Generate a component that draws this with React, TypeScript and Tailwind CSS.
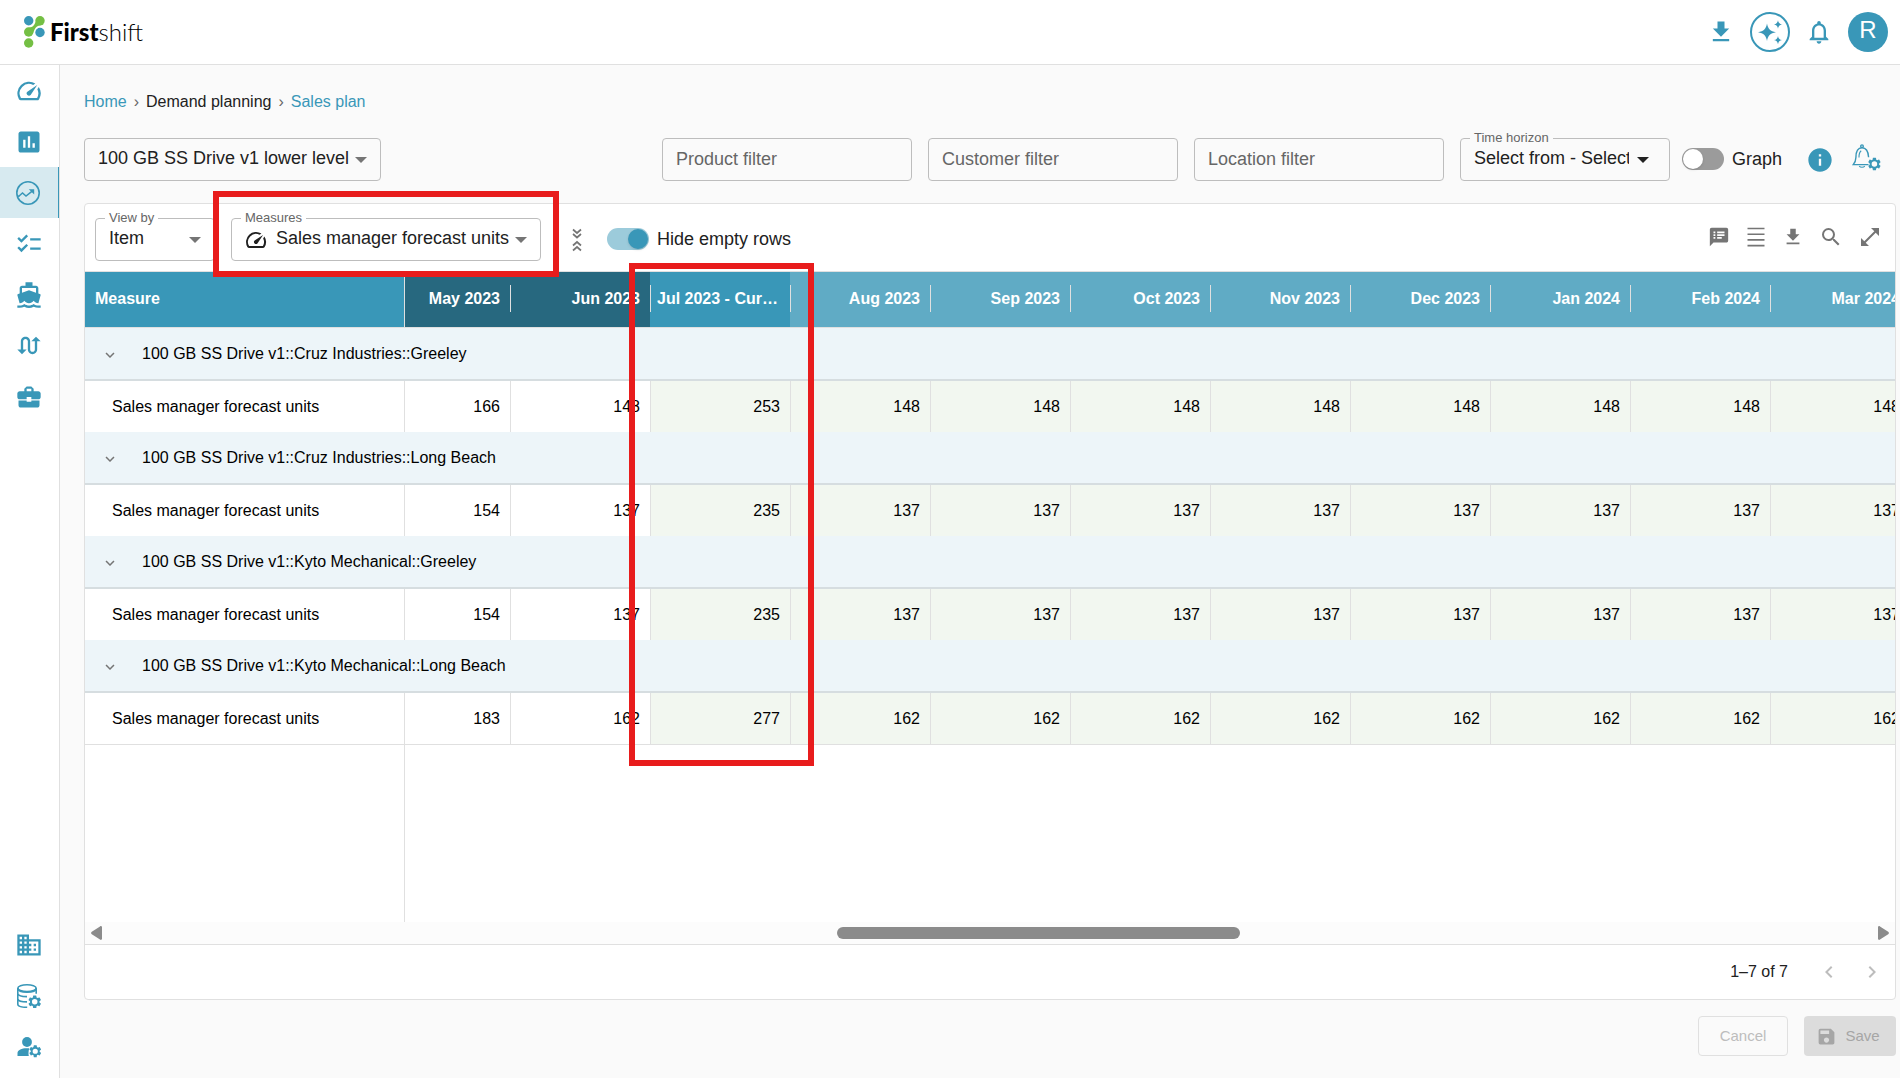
import { ReactNode, useState } from "react";
import { twMerge } from "tailwind-merge";
import {
  MdBusiness,
  MdBusinessCenter,
  MdChecklist,
  MdChevronLeft,
  MdChevronRight,
  MdDirectionsBoat,
  MdExpandMore,
  MdFileDownload,
  MdInfo,
  MdInsertChart,
  MdNotificationsNone,
  MdOpenInFull,
  MdSave,
  MdSearch,
  MdSpeakerNotes,
  MdSpeed,
  MdSwapCalls,
} from "react-icons/md";

type IconProps = { className?: string };

const GEAR =
  "M19.14 12.94c.04-.3.06-.61.06-.94 0-.32-.02-.64-.07-.94l2.03-1.58a.49.49 0 0 0 .12-.61l-1.92-3.32a.488.488 0 0 0-.59-.22l-2.39.96c-.5-.38-1.03-.7-1.62-.94l-.36-2.54a.484.484 0 0 0-.48-.41h-3.84c-.24 0-.43.17-.47.41l-.36 2.54c-.59.24-1.13.57-1.62.94l-2.39-.96c-.22-.08-.47 0-.59.22L2.74 8.87c-.12.21-.08.47.12.61l2.03 1.58c-.05.3-.09.63-.09.94s.02.64.07.94l-2.03 1.58a.49.49 0 0 0-.12.61l1.92 3.32c.12.22.37.29.59.22l2.39-.96c.5.38 1.03.7 1.62.94l.36 2.54c.05.24.24.41.48.41h3.84c.24 0 .44-.17.47-.41l.36-2.54c.59-.24 1.13-.56 1.62-.94l2.39.96c.22.08.47 0 .59-.22l1.92-3.32c.12-.22.07-.47-.12-.61l-2.01-1.58zM12 16.2a4.2 4.2 0 1 1 0-8.4 4.2 4.2 0 0 1 0 8.4z";

const TrendIcon = ({ className }: IconProps) => (
  <svg viewBox="0 0 24 24" className={className} fill="none" stroke="currentColor">
    <circle cx="12" cy="12" r="11.2" strokeWidth="1.6" />
    <path d="M2.5 15.5 6.5 12l3.5 3 6.5-5.2" strokeWidth="1.5" />
    <path d="M1.5 16l2-1.5" strokeWidth="1.3" />
    <path d="M12.8 8.2h5.4v5.2z" fill="currentColor" stroke="none" />
  </svg>
);

const DatabaseGearIcon = ({ className }: IconProps) => (
  <svg viewBox="0 0 24 24" className={className} fill="none" stroke="currentColor" strokeWidth="1.6">
    <ellipse cx="10" cy="4.2" rx="9.2" ry="3.4" />
    <path d="M.8 4.2v16c0 1.9 4 3 9.4 3.2M.8 9.6c.4 1.9 4.6 3 9.2 3M.8 15c.4 1.8 4.4 2.9 9.2 2.9M19.2 4.2v5.6" />
    <path d="M.8 4.4c.4 2.4 4.6 3.9 9.2 3.9s8.8-1.3 9.2-3.9" />
    <g transform="translate(9.8 9.9) scale(.66)" fill="currentColor" stroke="none">
      <path d={GEAR} />
    </g>
  </svg>
);

const UserGearIcon = ({ className }: IconProps) => (
  <svg viewBox="0 0 24 24" className={className} fill="currentColor">
    <circle cx="10" cy="7" r="4.9" />
    <path d="M11.8 21H.5v-3c0-3 4.5-4.8 8.8-4.8h3c-.9 2.6-1 5.4-.5 7.8z" />
    <g transform="translate(10.8 8.8) scale(.62)">
      <path d={GEAR} />
    </g>
  </svg>
);

const BellGearIcon = ({ className }: IconProps) => (
  <svg viewBox="0 0 30 28" className={className} fill="none" stroke="currentColor" strokeWidth="1.4">
    <circle cx="10" cy="2.2" r="1.3" />
    <path d="M16.5 20.6H1.2c2-2.2 2.7-4 2.7-7 0-5.6 1.8-9.8 6.1-9.8s6.2 3.4 6.6 9.4" />
    <path d="M7 13.5c-.1-3 .7-5.6 2.2-6.8M7.2 22.2c1.2 1.4 4.4 1.4 5.6 0" strokeWidth="1.1" />
    <g transform="translate(14.5 12.1) scale(.66)" fill="currentColor" stroke="none">
      <path d={GEAR} />
    </g>
  </svg>
);

const SparkleIcon = ({ className }: IconProps) => (
  <svg viewBox="0 0 24 24" className={className} fill="currentColor">
    <path d="M9 3.500c.8 5 3.200 7.900 9 8.800-5.800.9-8.200 3.800-9 8.800-.8-5-3.200-7.900-9-8.800 5.800-.9 8.200-3.800 9-8.800z" />
    <path d="M20 .3c.4 2.400 1.500 3.800 4 4.200-2.500.4-3.600 1.800-4 4.200-.4-2.400-1.500-3.800-4-4.200 2.500-.4 3.600-1.800 4-4.200zM20 15.900c.4 2.400 1.500 3.800 4 4.200-2.500.4-3.600 1.800-4 4.200-.4-2.400-1.500-3.800-4-4.200 2.500-.4 3.600-1.800 4-4.200z" />
  </svg>
);

const DensityIcon = ({ className }: IconProps) => (
  <svg viewBox="0 0 22 22" className={className} stroke="currentColor" strokeWidth="1.6">
    <path d="M2.500 2.500h17M2.500 8.200h17M2.500 13.900h17M2.500 19.600h17" />
  </svg>
);

const CollapseIcon = ({ className }: IconProps) => (
  <svg viewBox="0 0 12 26" className={className} fill="none" stroke="currentColor" strokeWidth="1.7">
    <path d="M2 2.500l4 3.500 4-3.500M2 7l4 3.500L10 7M2 18.500 6 15l4 3.500M2 23.500 6 20l4 3.500" />
  </svg>
);

const CaretIcon = ({ className }: IconProps) => (
  <svg viewBox="0 0 12 6" className={twMerge("pointer-events-none h-[6px] w-3 shrink-0 text-[#757575]", className)}>
    <path d="M0 0h12L6 6z" fill="currentColor" />
  </svg>
);

const Logo = () => (
  <a href="#" className="flex items-center gap-1 text-black">
    <svg viewBox="0 0 22 32" className="h-8 w-[22px]">
      <g fill="#74bf44">
        <path d="M13 2.500l6.500 5.800c-1.500 1.200-4.500.9-6.500 2.100-2.200 1.200-2.500 3.700-4 6.800L2 13c1.500-1.400 4.600-1.300 6.600-2.600 2.300-1.500 3-4.600 4.400-7.900z" />
        <circle cx="16" cy="4.800" r="4.700" />
        <circle cx="4.700" cy="16" r="4.700" />
        <circle cx="4.700" cy="27" r="4.700" />
      </g>
      <g fill="#3997b8">
        <circle cx="4.700" cy="4.800" r="4.700" />
        <circle cx="16" cy="16.500" r="4.700" />
      </g>
    </svg>
    <span className="font-[Lato,sans-serif] text-2xl leading-8">
      <span className="font-black">First</span>
      <span className="font-light">shift</span>
    </span>
  </a>
);

const mainNav = [
  { label: "Dashboard", icon: MdSpeed },
  { label: "Reports", icon: MdInsertChart },
  { label: "Demand planning", icon: TrendIcon, active: true },
  { label: "Tasks", icon: MdChecklist },
  { label: "Supply", icon: MdDirectionsBoat },
  { label: "Flows", icon: MdSwapCalls },
  { label: "Business", icon: MdBusinessCenter },
];

const adminNav = [
  { label: "Company", icon: MdBusiness },
  { label: "Data settings", icon: DatabaseGearIcon },
  { label: "User settings", icon: UserGearIcon },
];

type NavItem = {
  label: string;
  icon: (props: IconProps) => ReactNode;
  active?: boolean;
};

const NavList = ({ items }: { items: NavItem[] }) => (
  <ul>
    {items.map(({ label, icon: Icon, active }) => (
      <li key={label}>
        <a
          href="#"
          aria-label={label}
          className={twMerge(
            "flex h-[51px] items-center justify-center pr-px text-[#3997b8]",
            active && "border-r border-[#3997b8] bg-[#d7eaf0] pr-[2px]"
          )}
        >
          <Icon className={active || Icon === DatabaseGearIcon || Icon === UserGearIcon ? "size-6" : "size-7"} />
        </a>
      </li>
    ))}
  </ul>
);

const FilterField = ({ label }: { label: string }) => (
  <input
    type="text"
    aria-label={label}
    placeholder={label}
    className="h-[43px] w-[250px] rounded border border-[#bdbdbd] bg-transparent px-[13px] text-lg text-[#212121] outline-none placeholder:text-[#666666]"
  />
);

type SelectFieldProps = {
  id: string;
  label?: string;
  value: string;
  className?: string;
  labelClassName?: string;
  caretClassName?: string;
  icon?: ReactNode;
};

const SelectField = ({ id, label, value, className, labelClassName, caretClassName, icon }: SelectFieldProps) => (
  <div className={twMerge("relative flex h-[43px] items-center rounded border border-[#bdbdbd] px-[13px]", className)}>
    {label && (
      <label
        htmlFor={id}
        className={twMerge("absolute -top-[9px] left-[9px] bg-white px-1 text-[13px] leading-4 text-[#666666]", labelClassName)}
      >
        {label}
      </label>
    )}
    {icon}
    <select
      id={id}
      aria-label={label ?? value}
      className="min-w-0 flex-1 appearance-none overflow-hidden bg-transparent pb-1 text-lg leading-6 text-[#212121] outline-none"
    >
      <option>{value}</option>
    </select>
    <CaretIcon className={caretClassName} />
  </div>
);

const Toggle = ({ label, defaultChecked = false }: { label: string; defaultChecked?: boolean }) => {
  const [checked, setChecked] = useState(defaultChecked);

  return (
    <label className="mb-[2px] flex items-center gap-2 text-lg whitespace-nowrap text-[#212121]">
      <input
        type="checkbox"
        checked={checked}
        onChange={() => setChecked(!checked)}
        className="h-[22px] w-[42px] appearance-none rounded-full bg-[#9b9b9b] p-px before:block before:size-5 before:rounded-full before:bg-white before:shadow-sm checked:bg-[#9ccbdb] checked:before:ml-5 checked:before:bg-[#3997b8]"
      />
      {label}
    </label>
  );
};

const IconButton = ({ label, className, children }: { label: string; className?: string; children: ReactNode }) => (
  <button type="button" aria-label={label} className={twMerge("flex shrink-0 items-center justify-center", className)}>
    {children}
  </button>
);

const months = [
  "May 2023",
  "Jun 2023",
  "Jul 2023 - Current",
  "Aug 2023",
  "Sep 2023",
  "Oct 2023",
  "Nov 2023",
  "Dec 2023",
  "Jan 2024",
  "Feb 2024",
  "Mar 2024",
];

const CURRENT_MONTH = 2;

const groups = [
  { name: "100 GB SS Drive v1::Cruz Industries::Greeley", values: [166, 148, 253], rest: 148 },
  { name: "100 GB SS Drive v1::Cruz Industries::Long Beach", values: [154, 137, 235], rest: 137 },
  { name: "100 GB SS Drive v1::Kyto Mechanical::Greeley", values: [154, 137, 235], rest: 137 },
  { name: "100 GB SS Drive v1::Kyto Mechanical::Long Beach", values: [183, 162, 277], rest: 162 },
];

const headerColor = (index: number) => {
  if (index < CURRENT_MONTH) return "bg-[#27687f]";
  if (index === CURRENT_MONTH) return "bg-[#3997b8]";
  return "bg-[#60abc5]";
};

const ForecastTable = () => (
  <table className="w-[1685px] table-fixed border-separate border-spacing-0 text-base text-black">
    <colgroup>
      <col className="w-[319px]" />
      <col className="w-[106px]" />
      {months.slice(1).map((month) => (
        <col key={month} className="w-[140px]" />
      ))}
    </colgroup>
    <thead>
      <tr className="h-14 text-white">
        <th className="border-b border-[#e0e0e0] bg-[#3997b8] px-[10px] pb-[2px] text-left">Measure</th>
        {months.map((month, index) => (
          <th
            key={month}
            className={twMerge("border-b border-[#e0e0e0] p-0 text-right", index > 0 && "pb-[2px]", headerColor(index))}
          >
            <div
              className={twMerge(
                "truncate border-l border-[#e0e0e0] pr-[10px] pl-[6px]",
                index === 0 ? "h-[55px] leading-[53px]" : "h-[27px] leading-[27px]"
              )}
            >
              {month}
            </div>
          </th>
        ))}
      </tr>
    </thead>
    {groups.map(({ name, values, rest }) => (
      <tbody key={name}>
        <tr className="h-[53px] bg-[#edf5f9]">
          <td colSpan={months.length + 1} className="border-b-2 border-[#d6dde0] p-0">
            <div className="flex items-center gap-5 pl-[13px]">
              <IconButton label={`Collapse ${name}`} className="size-6 pt-[2px] text-[#757575]">
                <MdExpandMore className="size-[18px]" />
              </IconButton>
              {name}
            </div>
          </td>
        </tr>
        <tr className="h-[51px]">
          <td className="px-[27px] pt-px">Sales manager forecast units</td>
          {months.map((month, index) => (
            <td
              key={month}
              className={twMerge(
                "border-l border-[#e0e0e0] pt-px pr-[10px] text-right",
                index >= CURRENT_MONTH && "bg-[#f2f7f0]"
              )}
            >
              {values[index] ?? rest}
            </td>
          ))}
        </tr>
      </tbody>
    ))}
  </table>
);

const ScrollBar = () => (
  <div className="flex h-[23px] shrink-0 items-center border-b border-[#e0e0e0] bg-[#fcfcfc] px-[6px] text-[#8b8b8b]">
    <svg viewBox="0 0 11 14" className="h-[14px] w-[11px]" fill="currentColor">
      <path d="M11 1.500v11c0 1.200-1 1.800-2 1.100L.8 8.200a1.400 1.400 0 0 1 0-2.400L9 .4c1-.7 2-.1 2 1.100z" />
    </svg>
    <div className="flex-[735]" />
    <div className="h-3 flex-[403] rounded-full bg-[#8b8b8b]" />
    <div className="flex-[638]" />
    <svg viewBox="0 0 11 14" className="h-[14px] w-[11px]" fill="currentColor">
      <path d="M0 1.500v11c0 1.200 1 1.800 2 1.100l8.200-5.400a1.400 1.400 0 0 0 0-2.400L2 .4C1-.3 0 .3 0 1.500z" />
    </svg>
  </div>
);

const Breadcrumbs = () => (
  <nav aria-label="Breadcrumb" className="flex gap-[7px] text-base leading-6">
    <a href="#" className="text-[#3997b8]">
      Home
    </a>
    <span className="text-[#666666]">›</span>
    <span className="text-[#212121]">Demand planning</span>
    <span className="text-[#666666]">›</span>
    <a href="#" className="text-[#3997b8]">
      Sales plan
    </a>
  </nav>
);

const App = () => {
  return (
    <div className="relative flex min-h-screen flex-col overflow-hidden bg-[#fafafa] font-['Liberation_Sans',Arial,sans-serif]">
      <header className="flex h-[65px] shrink-0 items-center justify-between border-b border-[#e0e0e0] bg-white pr-3 pl-6">
        <Logo />
        <div className="flex items-center gap-[15px] text-[#3997b8]">
          <IconButton label="Downloads">
            <MdFileDownload className="size-7" />
          </IconButton>
          <IconButton label="Assistant" className="size-10 rounded-full border-2 border-[#3997b8]">
            <SparkleIcon className="size-6" />
          </IconButton>
          <IconButton label="Notifications">
            <MdNotificationsNone className="size-7" />
          </IconButton>
          <button type="button" className="size-10 rounded-full bg-[#3997b8] pb-1 text-2xl text-white">
            R
          </button>
        </div>
      </header>

      <div className="flex min-h-0 flex-1">
        <aside className="flex w-[60px] shrink-0 flex-col justify-between border-r border-[#e0e0e0] bg-white pb-[6px]">
          <NavList items={mainNav} />
          <NavList items={adminNav} />
        </aside>

        <main className="flex min-w-0 flex-1 flex-col pt-[25px] pr-1 pb-[22px] pl-6">
          <Breadcrumbs />

          <div className="mt-6 flex items-center justify-between">
            <SelectField id="plan" value="100 GB SS Drive v1 lower level" className="w-[297px]" />
            <div className="flex items-center gap-4">
              <FilterField label="Product filter" />
              <FilterField label="Customer filter" />
              <FilterField label="Location filter" />
              <SelectField
                id="horizon"
                label="Time horizon"
                value="Select from - Select to"
                className="w-[210px] gap-2 pr-5"
                labelClassName="bg-[#fafafa]"
                caretClassName="text-[#212121]"
              />
              <div className="-ml-1 flex items-center pr-[14px]">
                <Toggle label="Graph" />
                <IconButton label="Information" className="ml-6 text-[#3997b8]">
                  <MdInfo className="size-7" />
                </IconButton>
                <IconButton label="Alert settings" className="ml-[18px] pb-1 text-[#3997b8]">
                  <BellGearIcon className="h-7 w-[30px]" />
                </IconButton>
              </div>
            </div>
          </div>

          <section className="mt-[22px] flex flex-1 flex-col overflow-hidden rounded border border-[#e0e0e0] bg-white">
            <div className="flex h-[68px] shrink-0 items-center justify-between border-b border-[#e0e0e0] pr-[13px] pl-[10px]">
              <div className="flex items-center pt-1">
                <SelectField id="view-by" label="View by" value="Item" className="w-[120px]" />
                <SelectField
                  id="measures"
                  label="Measures"
                  value="Sales manager forecast units"
                  className="ml-4 w-[310px] pl-3"
                  icon={<MdSpeed className="mr-2 size-6 shrink-0 text-[#212121]" />}
                />
                <IconButton label="Collapse all rows" className="ml-[30px] text-[#757575]">
                  <CollapseIcon className="h-[26px] w-3" />
                </IconButton>
                <div className="ml-6">
                  <Toggle label="Hide empty rows" defaultChecked />
                </div>
              </div>
              <div className="flex items-center gap-[15px] pb-px text-[#757575]">
                <IconButton label="Comments">
                  <MdSpeakerNotes className="size-[22px]" />
                </IconButton>
                <IconButton label="Density">
                  <DensityIcon className="size-[22px]" />
                </IconButton>
                <IconButton label="Export">
                  <MdFileDownload className="size-[22px]" />
                </IconButton>
                <IconButton label="Search">
                  <MdSearch className="size-6" />
                </IconButton>
                <IconButton label="Full screen">
                  <MdOpenInFull className="size-6" />
                </IconButton>
              </div>
            </div>

            <div className="flex-1 overflow-hidden">
              <div className="flex h-full flex-col">
                <ForecastTable />
                <div className="flex flex-1 border-t border-[#e0e0e0]">
                  <div className="w-[320px] border-r border-[#e0e0e0]" />
                </div>
              </div>
            </div>

            <ScrollBar />

            <footer className="flex h-[54px] shrink-0 items-center justify-end gap-[19px] pr-[11px] text-base text-[#212121]">
              <span className="pr-[10px]">1–7 of 7</span>
              <IconButton label="Previous page" className="text-[#bdbdbd]">
                <MdChevronLeft className="size-6" />
              </IconButton>
              <IconButton label="Next page" className="text-[#bdbdbd]">
                <MdChevronRight className="size-6" />
              </IconButton>
            </footer>
          </section>

          <div className="mt-4 flex justify-end gap-4 text-[15px]">
            <button type="button" disabled className="h-10 w-[90px] rounded border border-[#e0e0e0] text-[#bdbdbd]">
              Cancel
            </button>
            <button
              type="button"
              disabled
              className="flex h-10 w-[92px] items-center justify-center gap-2 rounded bg-[#dcdcdc] pr-1 text-[#a6a6a6]"
            >
              <MdSave className="size-[21px]" />
              Save
            </button>
          </div>
        </main>
      </div>

      <div className="pointer-events-none absolute top-[191px] left-[213px] h-[86px] w-[346px] border-6 border-[#e81c1c]" />
      <div className="pointer-events-none absolute top-[263px] left-[629px] h-[503px] w-[185px] border-6 border-[#e81c1c]" />
    </div>
  );
};

export default App;
